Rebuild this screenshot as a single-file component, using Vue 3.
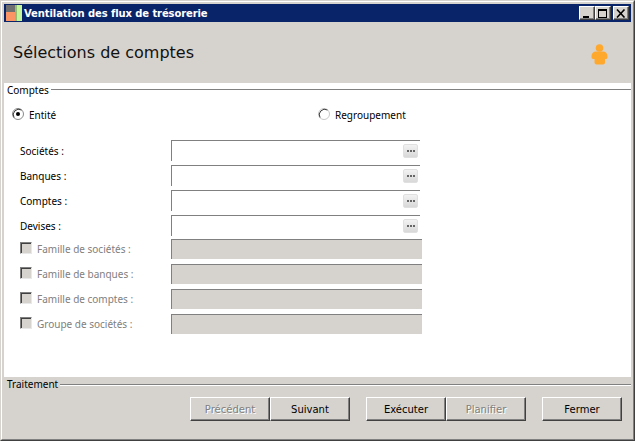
<script setup>
const fields = ['Sociétés :', 'Banques :', 'Comptes :', 'Devises :']
const disabled = ['Famille de sociétés :', 'Famille de banques :', 'Famille de comptes :', 'Groupe de sociétés :']
</script>

<template>
  <div class="window">
    <div class="inner">
      <div class="titlebar">
        <svg class="appicon" width="16" height="16" viewBox="0 0 16 16">
          <rect width="9" height="7" fill="#6f6f6f" />
          <rect y="7" width="9" height="9" fill="#fb9566" />
          <rect x="9" width="7" height="16" fill="#c4f59a" />
          <rect x="9" width="2" height="16" fill="#8fbf70" />
        </svg>
        <span class="title">Ventilation des flux de trésorerie</span>
        <div class="controls">
          <button class="ctl"><svg width="10" height="9" viewBox="0 0 10 9"><rect x="1" y="7" width="6" height="2" fill="#000" /></svg></button>
          <button class="ctl"><svg width="10" height="9" viewBox="0 0 10 9"><path d="M0 0h9v9H0z M1 2v6h7V2z" fill="#000" fill-rule="evenodd" /></svg></button>
          <button class="ctl close"><svg width="10" height="9" viewBox="0 0 10 9"><path d="M1 0.5 8.5 8.5M8.5 0.5 1 8.5" stroke="#000" stroke-width="1.6" fill="none" /></svg></button>
        </div>
      </div>

      <header class="header">
        <h1>Sélections de comptes</h1>
        <svg class="person" width="17" height="21" viewBox="0 0 17 21">
          <circle cx="8.5" cy="4" r="3.8" fill="#ffa82e" />
          <path d="M5 7.5h7c2.5 0 4.5 2 4.5 4.5v1.5c0 1-1 1.5-2.5 1.5v3.5c0 1-1 2-2 2H5.5c-1 0-2-1-2-2V15C2 15 .5 14.500 .5 13.500V12C.5 9.500 2.500 7.500 5 7.500z" fill="#ffa82e" />
        </svg>
      </header>

      <main class="panel">
        <div class="legend"><span>Comptes</span><i></i></div>
        <div class="radios">
          <label class="radio">
            <svg width="12" height="12" viewBox="0 0 12 12">
              <circle cx="6" cy="6" r="5.500" fill="#fff" stroke="#8a8a8a" />
              <path d="M2 9.500A5.500 5.500 0 0 1 9.500 2" fill="none" stroke="#404040" />
              <circle cx="6" cy="6" r="2" fill="#000" />
            </svg>
            <span class="rtext">Entité</span>
          </label>
          <label class="radio">
            <svg width="12" height="12" viewBox="0 0 12 12">
              <circle cx="6" cy="6" r="5.500" fill="#fff" stroke="#c8c8c8" />
              <path d="M2 9.500A5.500 5.500 0 0 1 9.500 2" fill="none" stroke="#404040" />
            </svg>
            <span class="rtext">Regroupement</span>
          </label>
        </div>

        <div class="form">
          <div v-for="f in fields" :key="f" class="row">
            <span class="lbl">{{ f }}</span>
            <div class="input">
              <span class="dots"><b></b><b></b><b></b></span>
            </div>
          </div>
          <div v-for="f in disabled" :key="f" class="row row-dis">
            <span class="lbl off">
              <span class="check"></span>
              {{ f }}
            </span>
            <div class="input dis"></div>
          </div>
        </div>
      </main>

      <footer class="footer">
        <div class="legend"><span>Traitement</span><i></i></div>
        <div class="actions">
          <div class="group">
            <button class="btn" disabled>Précédent</button>
            <button class="btn">Suivant</button>
          </div>
          <div class="group">
            <button class="btn">Exécuter</button>
            <button class="btn" disabled>Planifier</button>
          </div>
          <button class="btn">Fermer</button>
        </div>
      </footer>
    </div>
  </div>
</template>

<style>
html, body { margin: 0; background: #d6d3ce; }
</style>

<style scoped>
.window {
  width: 635px;
  height: 441px;
  box-sizing: border-box;
  border: 1px solid;
  border-color: #d6d3ce #404040 #404040 #d6d3ce;
  font-family: "Noto Sans", "Liberation Sans", sans-serif;
  font-size: 10px;
  color: #000;
  overflow: hidden;
}
.inner {
  height: 100%;
  box-sizing: border-box;
  border: 1px solid;
  border-color: #fff #808080 #808080 #fff;
  padding: 2px;
  background: #d6d3ce;
  display: flex;
  flex-direction: column;
}
.titlebar {
  height: 18px;
  flex: none;
  background: #0a246a;
  display: flex;
  align-items: center;
  padding: 0 2px;
}
.appicon { flex: none; }
.title {
  margin-left: 2px;
  color: #fff;
  font: bold 10px "DejaVu Sans", sans-serif;
  letter-spacing: -.1px;
}
.controls { margin-left: auto; display: flex; }
.ctl {
  width: 16px;
  height: 14px;
  padding: 0;
  box-sizing: border-box;
  background: #d6d3ce;
  border: 1px solid;
  border-color: #fff #404040 #404040 #fff;
  box-shadow: inset -1px -1px 0 #808080;
  display: flex;
  align-items: center;
  justify-content: center;
}
.close { margin-left: 2px; }
.header {
  height: 61px;
  flex: none;
  display: flex;
  align-items: center;
  justify-content: space-between;
  padding: 0 23px 0 9px;
}
h1 {
  margin: 0;
  font: 400 16px "DejaVu Sans", sans-serif;
  color: #111;
}
.person { margin-top: 3px; }
.panel {
  flex: 1;
  min-height: 0;
  background: #fff;
}
.legend {
  display: flex;
  align-items: center;
  height: 13px;
  padding-left: 3px;
  gap: 2px;
}
.legend i {
  flex: 1;
  height: 1px;
  background: #808080;
  box-shadow: 0 1px 0 #fff;
}
.radios {
  display: grid;
  grid-template-columns: 306px 1fr;
  padding: 12px 0 0 8px;
  height: 19px;
}
.radio { display: flex; align-items: center; gap: 5px; height: 12px; }
.rtext { position: relative; top: 1px; }
.form {
  display: flex;
  flex-direction: column;
  gap: 4px;
  margin-top: 13px;
  padding-left: 16px;
}
.row {
  display: grid;
  grid-template-columns: 151px 251px;
  align-items: center;
  height: 21px;
}
.row-dis { height: 20px; margin-bottom: 1px; }
.row-dis:nth-child(5) { margin-top: -1px; }
.lbl { display: flex; align-items: center; gap: 5px; }
.off { color: #808080; }
.check {
  width: 12px;
  height: 12px;
  margin-top: -2px;
  box-sizing: border-box;
  background: #d6d3ce;
  border: 1px solid;
  border-color: #808080 #e8e8e8 #e8e8e8 #808080;
  box-shadow: inset 1px 1px 0 #404040;
  flex: none;
}
.input {
  height: 21px;
  box-sizing: border-box;
  border-top: 1px solid #808080;
  border-left: 1px solid #808080;
  margin-right: 2px;
  display: flex;
  align-items: center;
  justify-content: flex-end;
  padding-right: 2px;
}
.input.dis {
  margin-right: 0;
  background: #d6d3ce;
  height: 20px;
}
.dots {
  width: 15px;
  height: 14px;
  box-sizing: border-box;
  border: 1px solid #e0e0e0;
  border-radius: 2px;
  background: linear-gradient(#f2f2f2, #d8d8d8);
  display: flex;
  align-items: center;
  justify-content: center;
  gap: 1px;
}
.dots b { width: 2px; height: 2px; background: #666; }
.footer {
  height: 60px;
  flex: none;
}
.footer .legend { height: 14px; }
.actions {
  display: flex;
  gap: 16px;
  justify-content: flex-end;
  padding: 6px 9px 0 0;
}
.group { display: flex; }
.btn {
  width: 80px;
  height: 24px;
  padding: 0;
  box-sizing: border-box;
  background: #d6d3ce;
  border: 1px solid;
  border-color: #fff #404040 #404040 #fff;
  box-shadow: inset -1px -1px 0 #808080;
  font: 10px "DejaVu Sans", sans-serif;
  color: #000;
}
.btn:disabled { color: #808080; text-shadow: 1px 1px 0 #fff; }
</style>
